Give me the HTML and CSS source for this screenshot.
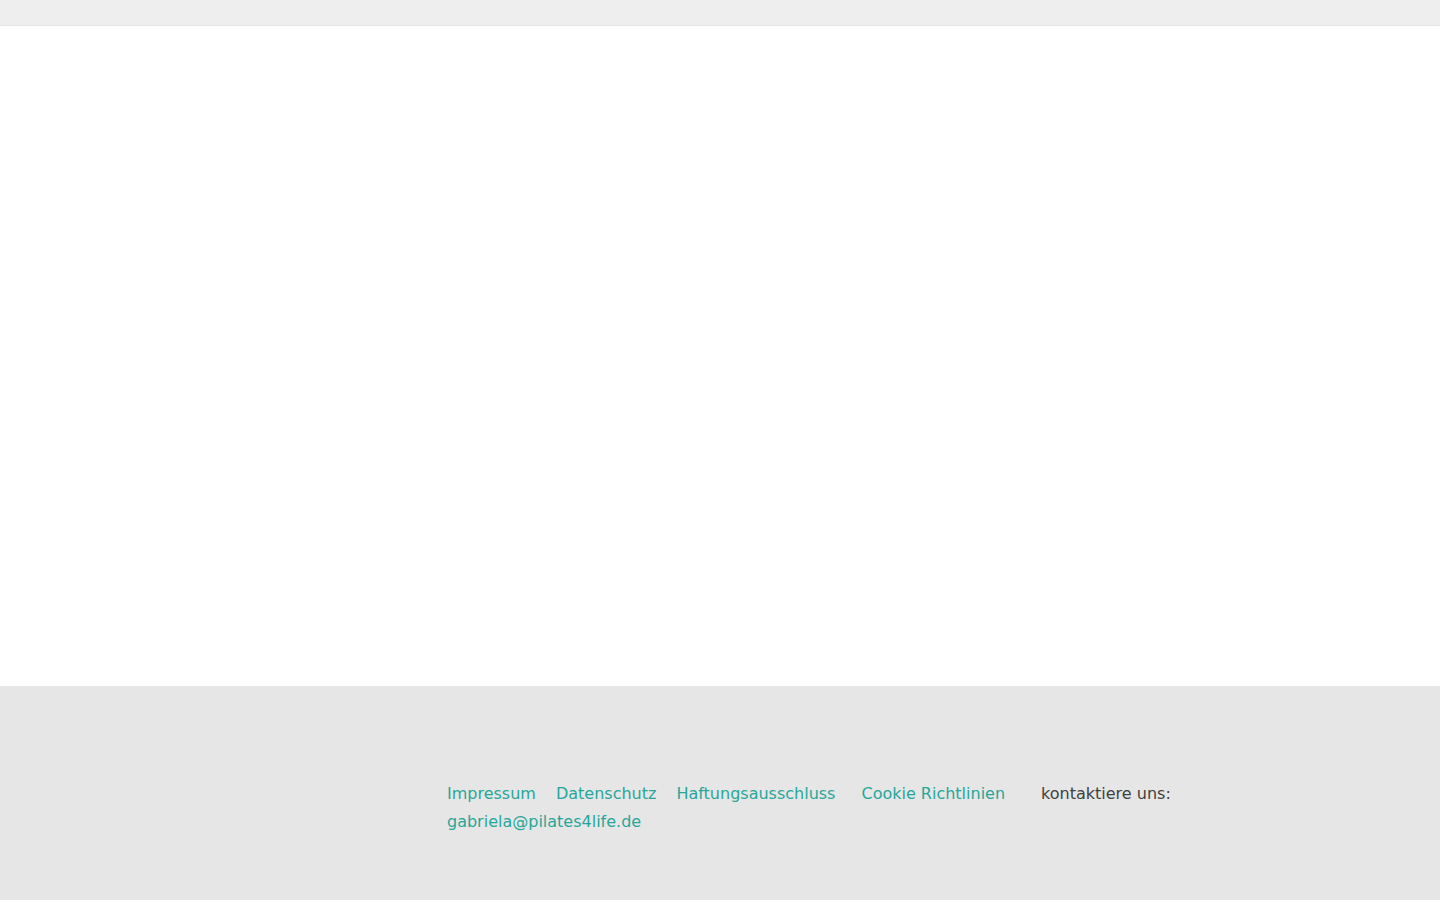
FILE: index.html
```html
<!DOCTYPE html>
<html lang="de">
<head>
<meta charset="utf-8">
<title>Pilates4Life</title>
<link rel="stylesheet" href="styles.css">
</head>
<body>
<header class="topbar"></header>
<main class="content"></main>
<footer class="footer">
  <nav class="footer-nav">
    <a class="link l1" href="#">Impressum</a>
    <a class="link l2" href="#">Datenschutz</a>
    <a class="link l3" href="#">Haftungsausschluss</a>
    <a class="link l4" href="#">Cookie Richtlinien</a>
    <span class="contact">kontaktiere uns:</span>
    <a class="link mail" href="#">gabriela@pilates4life.de</a>
  </nav>
</footer>
</body>
</html>
```
FILE: styles.css
```css
html, body {
  margin: 0;
  padding: 0;
}
body {
  font-family: "DejaVu Sans", sans-serif;
  font-size: 16px;
  background: #ffffff;
  color: #404040;
}
.topbar {
  height: 25px;
  background: #eeeeee;
  border-bottom: 1px solid #e6e6e6;
}
.content {
  height: 660px;
  background: #ffffff;
}
.footer {
  height: 214px;
  background: #e6e6e6;
  box-sizing: border-box;
  padding: 94px 0 0 447px;
}
.footer-nav {
  width: 760px;
  display: flex;
  flex-wrap: wrap;
  line-height: 28px;
}
.link {
  color: #26a69a;
  text-decoration: none;
}
.l1 { margin-right: 20px; }
.l2 { margin-right: 20px; }
.l3 { margin-right: 26px; }
.l4 { margin-right: 36px; }
.contact { color: #404040; }
```
